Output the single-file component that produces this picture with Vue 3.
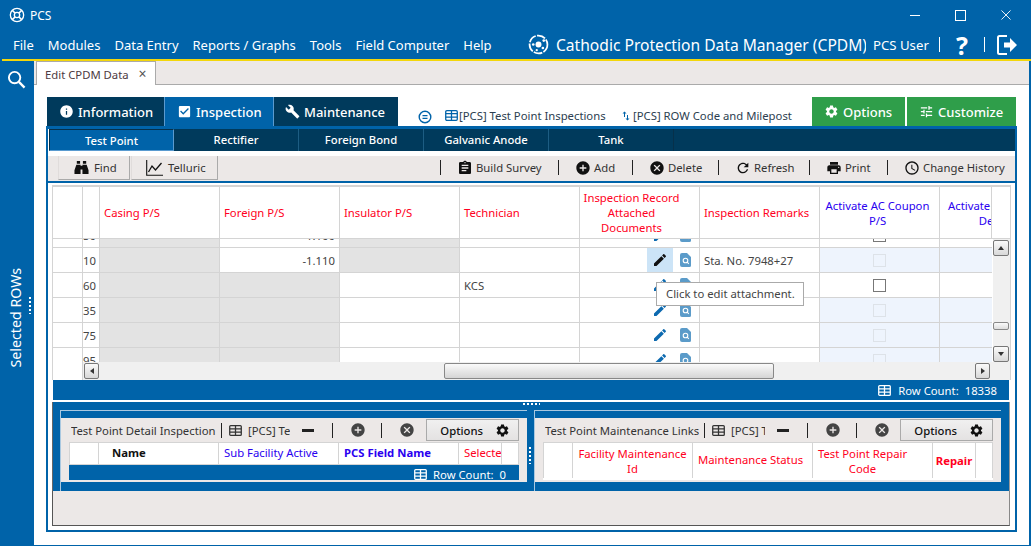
<template>
  <div class="window">
    <!-- title bar -->
    <div class="titlebar">
      <svg class="app-logo" viewBox="0 0 24 24"><circle cx="12" cy="12" r="10" fill="none" stroke="#fff" stroke-width="2" /><circle cx="12" cy="12" r="4" fill="none" stroke="#fff" stroke-width="2" /><path d="M5 5l4 4M19 5l-4 4M5 19l4-4M19 19l-4-4" stroke="#fff" stroke-width="2.4" /></svg>
      <span class="app-name">PCS</span>
      <div class="win-btns">
        <span class="win-min"></span>
        <span class="win-max"></span>
        <svg class="win-close" viewBox="0 0 11 11"><path d="M.5.5l10 10M10.500.5l-10 10" stroke="#fff" fill="none" /></svg>
      </div>
    </div>

    <!-- menu -->
    <div class="menubar">
      <span v-for="m in menu" :key="m" class="menu-item">{{ m }}</span>
      <div class="menu-right">
        <svg class="cp-logo" viewBox="0 0 24 24"><circle cx="12" cy="12" r="10.2" fill="none" stroke="#fff" stroke-width="2" stroke-dasharray="10 1.5" /><circle cx="12" cy="12" r="3.4" fill="#fff" /><circle cx="18" cy="7.5" r="1.5" fill="#fff" /><circle cx="6" cy="12" r="1.5" fill="#fff" /><circle cx="17" cy="16" r="1.5" fill="#fff" /><circle cx="10" cy="18.5" r="1.3" fill="#fff" /></svg>
        <span class="cp-title">Cathodic Protection Data Manager (CPDM)</span>
        <span class="cp-user">PCS User</span>
        <span class="menu-sep"></span>
        <span class="help">?</span>
        <span class="menu-sep"></span>
        <svg class="logout" viewBox="0 0 21 22"><path d="M10 2H2.500A1.500 1.500 0 0 0 1 3.500v15A1.500 1.500 0 0 0 2.500 20H10" fill="none" stroke="#fff" stroke-width="2" /><path d="M7 8.500h6V4l7 7-7 7v-4.500H7z" fill="#fff" /></svg>
      </div>
    </div>

    <div class="main">
      <!-- collapsed side panel -->
      <div class="sidebar">
        <svg class="side-search" viewBox="0 0 20 20"><circle cx="8" cy="8" r="6" fill="none" stroke="#fff" stroke-width="2" /><path d="M12.500 12.500l6 6" stroke="#fff" stroke-width="2.400" /></svg>
        <span class="side-label">Selected ROWs</span>
        <span class="side-dots"></span>
      </div>

      <div class="content">
        <div class="tabstrip">
          <div class="doc-tab">Edit CPDM Data <span class="doc-close">×</span></div>
        </div>

        <div class="page">
          <div class="toptabs">
            <div class="toptab dark info"><svg class="ti" viewBox="0 0 24 24"><path fill="#fff" :d="icons.info" /></svg>Information</div>
            <div class="toptab active insp"><svg class="ti" viewBox="0 0 24 24"><path fill="#fff" :d="icons.check" /></svg>Inspection</div>
            <div class="toptab dark maint"><svg class="ti" viewBox="0 0 24 24"><path fill="#fff" :d="icons.wrench" /></svg>Maintenance</div>
            <svg class="collapse" viewBox="0 0 14 14"><circle cx="7" cy="7" r="5.800" fill="none" stroke="#0063a9" stroke-width="1.400" /><path d="M4.500 5.700h5M4.500 8.300h5" stroke="#0063a9" stroke-width="1.200" /></svg>
            <div class="toplink first"><svg class="table-ic blue" viewBox="0 0 14 12"><rect x=".7" y=".7" width="12.600" height="10.600" rx="1.200" fill="none" stroke="#0063a9" stroke-width="1.400" /><path d="M.7 4h12.600M.7 7.700h12.600M7 .7v10.600" stroke="#0063a9" stroke-width="1.400" /></svg>[PCS] Test Point Inspections</div>
            <div class="toplink second"><svg class="swap" viewBox="0 0 24 24"><path fill="#0063a9" :d="icons.swap" /></svg>[PCS] ROW Code and Milepost</div>
            <div class="toptab green opts"><svg class="ti" viewBox="0 0 24 24"><path fill="#fff" :d="icons.gear" /></svg>Options</div>
            <div class="toptab green cust"><svg class="ti" viewBox="0 0 24 24"><path fill="#fff" :d="icons.tune" /></svg>Customize</div>
          </div>

          <div class="frame">
            <div class="subtabs">
              <div v-for="(s, i) in subtabs" :key="s" class="subtab" :class="{ on: i === 0 }">{{ s }}</div>
            </div>

            <div class="toolbar">
              <button class="tool-btn find"><svg class="bino" viewBox="0 0 16 16"><path d="M3 1h3.500v3H3zM9.500 1H13v3H9.500zM2.500 5H7v10H.5v-4zM9 5h4.500l2 6v4H9zM7 6h2v4H7z" fill="#111" /></svg>Find</button>
              <button class="tool-btn tell"><svg class="chart" viewBox="0 0 17 16"><path d="M.7 0v15.300H17" fill="none" stroke="#111" stroke-width="1.100" /><path d="M2.500 12l3.500-6 3.500 4 6-7" fill="none" stroke="#111" stroke-width="1.300" /></svg>Telluric</button>
              <div class="tool-right">
                <template v-for="t in tools" :key="t.label">
                  <span class="tool-sep"></span>
                  <span class="tool" :style="{ width: t.w + 'px' }">
                    <svg class="tool-ic" viewBox="0 0 24 24"><path fill="#111" :d="icons[t.icon]" /></svg>{{ t.label }}
                  </span>
                </template>
              </div>
            </div>

            <!-- main grid -->
            <div class="grid-wrap">
              <div class="grid-box">
                <div class="grid-head">
                  <div class="h-cell w30"></div>
                  <div class="h-cell w17"></div>
                  <div v-for="h in heads" :key="h.t" class="h-cell w120" :class="[h.c, h.extra, { left: h.left }]">{{ h.t }}</div>
                  <div class="h-cell w52 blue"><span class="clip-head">Activate AC Coupon Depolar</span></div>
                </div>
                <div class="grid-rows">
                  <div v-for="(r, i) in rows" :key="i" class="row" :class="{ partial: i === 0 }">
                    <div class="cell w30"></div>
                    <div class="cell w17 num">{{ r.n }}</div>
                    <div class="cell w120" :class="{ gray: r.cg }"></div>
                    <div class="cell w120 right" :class="{ gray: r.fg }">{{ r.f }}</div>
                    <div class="cell w120" :class="{ gray: r.ig }"></div>
                    <div class="cell w120 txt">{{ r.tech }}</div>
                    <div class="cell w120 att">
                      <span class="pen" :class="{ hot: r.hot }"><svg viewBox="0 0 24 24"><path :fill="r.hot ? '#111' : '#0d6ab0'" :d="icons.pencil" /></svg></span>
                      <svg class="doc" viewBox="0 0 11 14"><path d="M2 0h5l4 4v8.500a1.500 1.500 0 0 1-1.500 1.500h-7.500A2 2 0 0 1 0 12V2a2 2 0 0 1 2-2z" fill="#5b9bc9" /><circle cx="5.500" cy="7.500" r="2.300" fill="none" stroke="#fff" stroke-width="1.100" /><path d="M7.200 9.200l1.600 1.600" stroke="#fff" stroke-width="1.100" /></svg>
                    </div>
                    <div class="cell w120 txt">{{ r.rem }}</div>
                    <div class="cell w120 chk" :class="{ off: r.off }"><span class="box"></span></div>
                    <div class="cell w52 chk" :class="{ off: r.off }"></div>
                  </div>
                </div>
                <!-- vertical scrollbar -->
                <div class="vbar">
                  <span class="sb-btn"><i class="tri up"></i></span>
                  <span class="sb-thumb"></span>
                  <span class="sb-btn last"><i class="tri down"></i></span>
                </div>
                <div class="hbar">
                  <span class="sb-btn h"><i class="tri lft"></i></span>
                  <span class="hthumb"></span>
                  <span class="sb-btn h"><i class="tri rgt"></i></span>
                </div>
              </div>
              <div class="status"><svg class="table-ic" viewBox="0 0 14 12"><rect x=".7" y=".7" width="12.600" height="10.600" rx="1" fill="none" stroke="#fff" stroke-width="1.400" /><path d="M.7 4.200h12.600M.7 7.800h12.600M7 .7v10.600" stroke="#fff" stroke-width="1.400" /></svg><span>Row Count:</span><span class="count">18338</span></div>
            </div>

            <!-- lower panels -->
            <div class="lower">
              <span class="h-split"></span>
              <div class="panel pl">
                <div class="panel-in">
                  <div class="p-bar">
                    <span class="p-title">Test Point Detail Inspection</span>
                    <span class="p-sep"></span>
                    <svg class="table-ic dark-ic" viewBox="0 0 14 12"><rect x=".7" y=".7" width="12.600" height="10.600" rx="1" fill="none" stroke="#333" stroke-width="1.400" /><path d="M.7 4.200h12.600M.7 7.800h12.600M7 .7v10.600" stroke="#333" stroke-width="1.400" /></svg>
                    <span class="p-link l1">[PCS] Test Point</span>
                    <span class="p-minus"></span>
                    <span class="p-sep s2"></span>
                    <svg class="p-ic" viewBox="0 0 24 24"><path fill="#444" :d="icons.plus" /></svg>
                    <span class="p-sep s3"></span>
                    <svg class="p-ic last" viewBox="0 0 24 24"><path fill="#444" :d="icons.cancel" /></svg>
                    <button class="opt-btn">Options<svg viewBox="0 0 24 24"><path fill="#111" :d="icons.gear" /></svg></button>
                  </div>
                  <div class="p-grid short">
                    <div class="p-head">
                      <div class="p-c w30"></div>
                      <div class="p-c w120 b name">Name</div>
                      <div class="p-c w120 bl">Sub Facility Active</div>
                      <div class="p-c w120 bl b">PCS Field Name</div>
                      <div class="p-c w43 rd"><span class="cut">Selected</span></div>
                      <div class="p-c w17"></div>
                    </div>
                    <div class="p-status"><svg class="table-ic" viewBox="0 0 14 12"><rect x=".7" y=".7" width="12.600" height="10.600" rx="1" fill="none" stroke="#fff" stroke-width="1.400" /><path d="M.7 4.200h12.600M.7 7.800h12.600M7 .7v10.600" stroke="#fff" stroke-width="1.400" /></svg><span>Row Count:</span><span class="count0">0</span></div>
                  </div>
                </div>
              </div>
              <div class="v-split"></div>
              <div class="panel pr">
                <div class="panel-in">
                  <div class="p-bar">
                    <span class="p-title r">Test Point Maintenance Links</span>
                    <span class="p-sep"></span>
                    <svg class="table-ic dark-ic" viewBox="0 0 14 12"><rect x=".7" y=".7" width="12.600" height="10.600" rx="1" fill="none" stroke="#333" stroke-width="1.400" /><path d="M.7 4.200h12.600M.7 7.800h12.600M7 .7v10.600" stroke="#333" stroke-width="1.400" /></svg>
                    <span class="p-link l2">[PCS] Test Point</span>
                    <span class="p-minus"></span>
                    <span class="p-sep s2"></span>
                    <svg class="p-ic" viewBox="0 0 24 24"><path fill="#444" :d="icons.plus" /></svg>
                    <span class="p-sep s3"></span>
                    <svg class="p-ic last" viewBox="0 0 24 24"><path fill="#444" :d="icons.cancel" /></svg>
                    <button class="opt-btn">Options<svg viewBox="0 0 24 24"><path fill="#111" :d="icons.gear" /></svg></button>
                  </div>
                  <div class="p-grid">
                    <div class="p-head tall">
                      <div class="p-c w30"></div>
                      <div class="p-c w120 rd ctr">Facility Maintenance Id</div>
                      <div class="p-c w120 rd">Maintenance Status</div>
                      <div class="p-c w120 rd ctr repair-code">Test Point Repair Code</div>
                      <div class="p-c w43 rd b ctr"><span class="cut">Repair</span></div>
                      <div class="p-c w17"></div>
                    </div>
                  </div>
                </div>
              </div>
            </div>

            <div class="bottom-fill"></div>
          </div>
        </div>

        <div class="tooltip">Click to edit attachment.</div>
      </div>
    </div>
  </div>
</template>

<script setup>
const menu = ["File", "Modules", "Data Entry", "Reports / Graphs", "Tools", "Field Computer", "Help"];
const subtabs = ["Test Point", "Rectifier", "Foreign Bond", "Galvanic Anode", "Tank"];

const icons = {
  info: "M12 2C6.480 2 2 6.480 2 12s4.480 10 10 10 10-4.480 10-10S17.520 2 12 2zm1 15h-2v-6h2v6zm0-8h-2V7h2v2z",
  check: "M19 3H5c-1.110 0-2 .9-2 2v14c0 1.100.89 2 2 2h14c1.110 0 2-.9 2-2V5c0-1.100-.89-2-2-2zm-9 14l-5-5 1.410-1.410L10 14.170l7.590-7.590L19 8l-9 9z",
  wrench: "M22.700 19l-9.100-9.100c.9-2.300.4-5-1.500-6.900-2-2-5-2.400-7.400-1.300L9 6 6 9 1.600 4.700C.4 7.100.9 10.100 2.900 12.100c1.900 1.900 4.600 2.400 6.900 1.500l9.100 9.100c.4.4 1 .4 1.400 0l2.300-2.300c.5-.4.5-1.100.1-1.400z",
  gear: "M19.140 12.940c.04-.3.06-.61.06-.94 0-.32-.02-.64-.07-.94l2.030-1.580c.18-.14.23-.41.12-.61l-1.920-3.320c-.12-.22-.37-.29-.59-.22l-2.390.96c-.5-.38-1.030-.7-1.620-.94l-.36-2.540c-.04-.24-.24-.41-.48-.41h-3.840c-.24 0-.43.17-.47.41l-.36 2.540c-.59.24-1.130.57-1.620.94l-2.390-.96c-.22-.08-.47 0-.59.22L2.740 8.870c-.12.21-.08.47.12.61l2.030 1.580c-.05.3-.09.63-.09.94s.02.64.07.94l-2.030 1.580c-.18.14-.23.41-.12.61l1.920 3.320c.12.22.37.29.59.22l2.390-.96c.5.38 1.030.7 1.620.94l.36 2.540c.05.24.24.41.48.41h3.840c.24 0 .44-.17.47-.41l.36-2.540c.59-.24 1.130-.56 1.620-.94l2.390.96c.22.08.47 0 .59-.22l1.920-3.320c.12-.22.07-.47-.12-.61l-2.010-1.580zM12 15.600c-1.980 0-3.600-1.620-3.600-3.600s1.620-3.600 3.600-3.600 3.600 1.620 3.600 3.600-1.620 3.600-3.600 3.600z",
  tune: "M3 17v2h6v-2H3zM3 5v2h10V5H3zm10 16v-2h8v-2h-8v-2h-2v6h2zM7 9v2H3v2h4v2h2V9H7zm14 4v-2H11v2h10zm-6-4h2V7h4V5h-4V3h-2v6z",
  swap: "M16 17.010V10h-2v7.010h-3L15 21l4-3.990h-3zM9 3L5 6.990h3V14h2V6.990h3L9 3z",
  pencil: "M3 17.250V21h3.750L17.810 9.940l-3.750-3.750L3 17.250zM20.710 7.040c.39-.39.39-1.020 0-1.410l-2.340-2.340c-.39-.39-1.020-.39-1.410 0l-1.830 1.830 3.750 3.750 1.830-1.830z",
  clipboard: "M19 3h-4.180C14.400 1.840 13.300 1 12 1c-1.300 0-2.400.84-2.820 2H5c-1.100 0-2 .9-2 2v14c0 1.100.9 2 2 2h14c1.100 0 2-.9 2-2V5c0-1.100-.9-2-2-2zm-7 0c.55 0 1 .45 1 1s-.45 1-1 1-1-.45-1-1 .45-1 1-1zm2 14H7v-2h7v2zm3-4H7v-2h10v2zm0-4H7V7h10v2z",
  plus: "M12 2C6.480 2 2 6.480 2 12s4.480 10 10 10 10-4.480 10-10S17.520 2 12 2zm5 11h-4v4h-2v-4H7v-2h4V7h2v4h4v2z",
  cancel: "M12 2C6.470 2 2 6.470 2 12s4.470 10 10 10 10-4.470 10-10S17.530 2 12 2zm5 13.590L15.590 17 12 13.410 8.410 17 7 15.590 10.590 12 7 8.410 8.410 7 12 10.590 15.590 7 17 8.410 13.410 12 17 15.590z",
  refresh: "M17.650 6.350C16.200 4.900 14.210 4 12 4c-4.420 0-7.990 3.580-7.990 8s3.570 8 7.990 8c3.730 0 6.840-2.550 7.730-6h-2.080c-.82 2.330-3.040 4-5.650 4-3.310 0-6-2.690-6-6s2.690-6 6-6c1.660 0 3.140.69 4.220 1.780L13 11h7V4l-2.350 2.350z",
  print: "M19 8H5c-1.660 0-3 1.340-3 3v6h4v4h12v-4h4v-6c0-1.660-1.340-3-3-3zm-3 11H8v-5h8v5zm3-7c-.55 0-1-.45-1-1s.45-1 1-1 1 .45 1 1-.45 1-1 1zm-1-9H6v4h12V3z",
  clock: "M12 2C6.470 2 2 6.480 2 12s4.470 10 10 10 10-4.480 10-10S17.530 2 12 2zm0 18c-4.420 0-8-3.580-8-8s3.580-8 8-8 8 3.580 8 8-3.580 8-8 8zm.5-13H11v6l5.250 3.150.75-1.230-4.500-2.670z",
};

const tools = [
  { label: "Build Survey", icon: "clipboard", w: 117 },
  { label: "Add", icon: "plus", w: 73 },
  { label: "Delete", icon: "cancel", w: 85 },
  { label: "Refresh", icon: "refresh", w: 90 },
  { label: "Print", icon: "print", w: 77 },
  { label: "Change History", icon: "clock", w: 121 },
];

const heads = [
  { t: "Casing P/S", c: "red", left: true },
  { t: "Foreign P/S", c: "red", left: true },
  { t: "Insulator P/S", c: "red", left: true },
  { t: "Technician", c: "red", left: true },
  { t: "Inspection Record Attached Documents", c: "red", extra: "shift-l" },
  { t: "Inspection Remarks", c: "red", left: true },
  { t: "Activate AC Coupon P/S", c: "blue", extra: "shift-s" },
];

const rows = [
  { n: "50", cg: true, f: "-1.100", ig: true, off: false },
  { n: "10", cg: true, f: "-1.110", ig: true, hot: true, rem: "Sta. No. 7948+27", off: true },
  { n: "60", cg: true, fg: true, tech: "KCS", off: false },
  { n: "35", cg: true, fg: true, off: true },
  { n: "75", cg: true, fg: true, off: true },
  { n: "95", cg: true, fg: true, off: true },
];
</script>

<style scoped>
.window {
  width: 1031px;
  height: 546px;
  box-sizing: border-box;
  display: flex;
  flex-direction: column;
  background: #0063a9;
  font-family: "Noto Sans", "Open Sans", sans-serif;
  font-size: 11.300px;
  color: #333;
  overflow: hidden;
}

/* title + menu */
.titlebar {
  height: 30px;
  display: flex;
  align-items: center;
  padding-left: 9px;
  color: #fff;
  flex: none;
}
.app-logo { width: 16px; height: 16px; }
.app-name { margin-left: 5px; font-size: 12px; }
.win-btns { margin-left: auto; display: flex; align-items: center; }
.win-min { width: 10px; height: 1px; background: #fff; margin-right: 35px; }
.win-max { width: 9px; height: 9px; border: 1px solid #fff; margin-right: 35px; }
.win-close { width: 10px; height: 10px; margin-right: 20px; }

.menubar {
  height: 29px;
  flex: none;
  margin-left: 2px;
  border-bottom: 2px solid #f3d60b;
  display: flex;
  align-items: center;
  color: #fff;
  font-size: 13px;
  padding-left: 11px;
}
.menu-item { margin-right: 14px; white-space: nowrap; }
.menu-right { margin-left: auto; display: flex; align-items: center; padding-right: 13px; }
.cp-logo { width: 21px; height: 21px; }
.cp-title { margin-left: 7px; width: 310px; font-size: 15.600px; overflow: hidden; white-space: nowrap; }
.cp-user { margin-left: 7px; width: 56px; font-size: 13.200px; white-space: nowrap; }
.menu-sep { width: 1px; height: 15px; background: #fff; margin-left: 10px; }
.help { width: 44px; text-align: center; font-size: 25px; font-weight: 700; line-height: 28px; }
.help + .menu-sep { margin-left: 0; }
.logout { width: 21px; height: 22px; margin-left: 12px; }

.main { flex: 1; display: flex; min-height: 0; }
.sidebar { width: 33px; flex: none; position: relative; display: flex; flex-direction: column; align-items: center; }
.side-search { width: 19px; height: 19px; margin-top: 9px; }
.side-label {
  writing-mode: vertical-rl;
  transform: rotate(180deg);
  color: #fff;
  font-size: 14.200px;
  margin-top: 179px;
  white-space: nowrap;
  position: relative;
  left: -1px;
}
.side-dots {
  position: absolute;
  left: 29px;
  top: 236px;
  width: 2px;
  height: 17px;
  background: repeating-linear-gradient(to bottom, #fff 0 2px, transparent 2px 4px);
}

.content {
  flex: 1;
  min-width: 0;
  background: #fff;
  margin: 0 2px 1px 1px;
  position: relative;
  display: flex;
  flex-direction: column;
}
.tabstrip {
  height: 24px;
  box-sizing: border-box;
  background: #ece8e7;
  border-bottom: 1px solid #aaa;
  flex: none;
  padding-left: 2px;
}
.doc-tab {
  width: 120px;
  height: 24px;
  box-sizing: border-box;
  background: #fff;
  border: 1px solid #aaa;
  border-bottom: none;
  padding-left: 8px;
  line-height: 23px;
  color: #4d3a42;
  position: relative;
}
.doc-close { margin-left: 7px; font-size: 14px; color: #555; }

.page { flex: 1; padding: 12px 12px 13px 12px; min-height: 0; display: flex; flex-direction: column; }

/* big tabs */
.toptabs { height: 29px; display: flex; align-items: stretch; flex: none; }
.toptab {
  flex: none;
  display: flex;
  align-items: center;
  color: #fff;
  font-size: 13px;
  font-weight: 500;
  white-space: nowrap;
  box-sizing: border-box;
}
.ti { width: 15px; height: 15px; margin-right: 4px; }
.dark { background: #003a5c; }
.active { background: #0063a9; border-left: 1px solid #5a9bd0; border-right: 1px solid #5a9bd0; }
.green { background: #2f9e4a; }
.info { width: 117px; padding-left: 12px; margin-left: 1px; }
.insp { width: 110px; padding-left: 12px; }
.maint { width: 124px; padding-left: 11px; }
.opts { width: 93px; padding-left: 12px; margin-left: 3px; }
.cust { width: 109px; padding-left: 12px; margin-left: 2px; }
.collapse { width: 14px; height: 14px; margin: 13px 0 0 20px; flex: none; }
.toplink { flex: none; display: flex; align-items: center; white-space: nowrap; padding-top: 8px; color: #2c3e50; }
.toplink.first { margin-left: 13px; width: 175px; }
.toplink.second { width: 189px; }
.table-ic { width: 13px; height: 11px; margin-right: 1px; flex: none; }
.swap { width: 12px; height: 12px; margin-right: 1px; }

.frame {
  flex: 1;
  min-height: 0;
  border: 2px solid #0063a9;
  border-top-width: 3px;
  display: flex;
  flex-direction: column;
}

/* sub tabs */
.subtabs { height: 22px; display: flex; background: #003a5c; flex: none; margin-left: 1px; }
.subtab {
  width: 124px;
  flex: none;
  border-right: 1px solid #1d5d83;
  color: #fff;
  text-align: center;
  font-weight: 500;
  line-height: 21px;
}
.subtab:last-child { border-right: 1px solid #06304a; }
.subtab.on { background: #0063a9; border: 1px solid #06304a; border-right-color: #5a9bd0; border-bottom-color: #5a9bd0; box-sizing: border-box; width: 125px; line-height: 21px; }

/* toolbar */
.toolbar {
  height: 25px;
  margin-top: 5px;
  background: #ece8e7;
  border-bottom: 2px solid #0063a9;
  flex: none;
  display: flex;
  align-items: flex-start;
  padding-left: 10px;
}
.tool-btn {
  height: 24px;
  background: #ece8e7;
  border: none;
  border-right: 1px solid #aaa;
  border-bottom: 1px solid #aaa;
  border-left: 1px solid #e0dcdb;
  font: inherit;
  color: #333;
  display: flex;
  align-items: center;
  padding: 0;
  margin-right: 1px;
}
.find { width: 72px; padding-left: 15px; }
.tell { width: 87px; padding-left: 14px; }
.bino { width: 15px; height: 15px; margin-right: 5px; }
.chart { width: 17px; height: 16px; margin-right: 5px; }
.tool-right { margin-left: auto; display: flex; align-items: center; height: 23px; padding-right: 6px; }
.tool-sep { width: 1px; height: 15px; background: #222; }
.tool { display: flex; align-items: center; white-space: nowrap; padding-left: 16px; box-sizing: border-box; }
.tool-ic { width: 16px; height: 16px; margin-right: 3px; flex: none; }

/* main grid */
.grid-wrap { flex: none; padding: 0 4px; }
.grid-box {
  height: 193px;
  margin-top: 2px;
  border-top: 2px solid #d4d4d4;
  border-left: 1px solid #d4d4d4;
  border-right: 1px solid #d4d4d4;
  position: relative;
  overflow: hidden;
}
.grid-head { display: flex; height: 51px; border-bottom: 1px solid #d4d4d4; overflow: hidden; }
.h-cell {
  flex: none;
  display: flex;
  align-items: center;
  justify-content: center;
  text-align: center;
  box-sizing: border-box;
  border-right: 1px solid #d4d4d4;
  padding: 0 4px;
  line-height: 15px;
  overflow: hidden;
}
.h-cell.left { justify-content: flex-start; text-align: left; }
.h-cell.shift-l { padding: 0 16px 0 0; }
.h-cell.shift-s { padding: 0 5px 0 1px; }
.w30 { width: 30px; }
.w17 { width: 17px; }
.w120 { width: 120px; }
.w52 { width: 52px; }
.w43 { width: 43px; }
.red { color: #ff0022; }
.blue { color: #2a00f0; }
.clip-head { width: 112px; flex: none; }
.h-cell.w52 { justify-content: flex-start; }

.grid-rows { height: 123px; overflow: hidden; width: 939px; }
.row { display: flex; height: 25px; border-bottom: 1px solid #d4d4d4; box-sizing: border-box; }
.row.partial { margin-top: -16px; }
.cell {
  flex: none;
  height: 100%;
  box-sizing: border-box;
  border-right: 1px solid #d4d4d4;
  line-height: 25px;
  color: #444;
  white-space: nowrap;
  overflow: hidden;
}
.cell.w52 { border-right: none; }
.gray { background: #e3e3e3; }
.right { text-align: right; padding-right: 4px; }
.txt { padding-left: 4px; }
.att { display: flex; align-items: center; padding-left: 67px; }
.pen { width: 26px; height: 24px; display: flex; align-items: center; justify-content: center; flex: none; }
.pen.hot { background: #cce4f7; }
.pen svg { width: 16px; height: 16px; }
.doc { width: 11px; height: 14px; margin-left: 7px; flex: none; }
.chk { display: flex; align-items: center; justify-content: center; }
.box { width: 11px; height: 11px; border: 1px solid #777; background: #fff; }
.off { background: #eef4fd; }
.off .box { background: #eef4fd; border-color: #dde2e8; }

.vbar {
  position: absolute;
  right: 0;
  top: 52px;
  width: 17px;
  height: 123px;
  background: #f0f0f0;
  display: flex;
  flex-direction: column;
  padding-top: 1px;
  box-sizing: border-box;
}
.sb-btn {
  width: 16px;
  height: 16px;
  box-sizing: border-box;
  border: 1px solid #777;
  border-radius: 2px;
  background: linear-gradient(#fafafa, #d8d8d8);
  display: flex;
  align-items: center;
  justify-content: center;
  flex: none;
}
.sb-btn.last { margin-top: 16px; }
.sb-thumb { width: 16px; height: 8px; border: 1px solid #888; border-radius: 2px; box-sizing: border-box; background: linear-gradient(#fafafa, #ddd); margin-top: 66px; flex: none; }
.tri { width: 0; height: 0; border: 3.500px solid transparent; }
.tri.up { border-bottom: 4px solid #333; border-top: none; }
.tri.down { border-top: 4px solid #333; border-bottom: none; }
.tri.lft { border-right: 4px solid #333; border-left: none; }
.tri.rgt { border-left: 4px solid #333; border-right: none; }
.hbar {
  height: 18px;
  background: #f0f0f0;
  margin-left: 29px;
  display: flex;
  align-items: center;
  padding-left: 1px;
  box-sizing: border-box;
  border-left: 1px solid #d4d4d4;
}
.hthumb {
  width: 330px;
  height: 16px;
  flex: none;
  box-sizing: border-box;
  border: 1px solid #888;
  border-radius: 2px;
  background: linear-gradient(#fafafa, #d5d5d5);
  margin: 0 201px 0 345px;
}
.sb-btn.h { width: 15px; height: 16px; }

.status {
  height: 20px;
  margin-left: 1px;
  margin-right: 2px;
  background: #0063a9;
  color: #fff;
  display: flex;
  align-items: center;
  justify-content: flex-end;
  padding-right: 12px;
}
.status .table-ic { margin-right: 7px; }
.count { margin-left: 6px; }

/* lower panels */
.lower {
  height: 89px;
  margin: 2px 5px 0 4px;
  border-left: 1px solid #666;
  border-right: 1px solid #999;
  background: #0063a9;
  display: flex;
  flex: none;
  padding-left: 7px;
  padding-top: 8px;
  box-sizing: border-box;
  position: relative;
}
.h-split {
  position: absolute;
  left: 470px;
  top: 1px;
  width: 17px;
  height: 2px;
  background: repeating-linear-gradient(to right, #fff 0 2px, transparent 2px 4px);
}
.panel { flex: none; border-left: 1px solid #a9c8e0; border-top: 1px solid #a9c8e0; height: 81px; box-sizing: border-box; padding-top: 7px; width: 467px; }
.panel-in { background: #ece8e7; height: 64px; padding: 0 8px; box-sizing: border-box; }
.v-split {
  width: 7px;
  flex: none;
  position: relative;
}
.v-split::after {
  content: "";
  position: absolute;
  left: 2px;
  top: 37px;
  width: 2px;
  height: 17px;
  background: repeating-linear-gradient(to bottom, #fff 0 2px, transparent 2px 4px);
}
.p-bar { height: 24px; display: flex; align-items: center; white-space: nowrap; }
.p-title { margin-left: 2px; width: 145px; overflow: hidden; flex: none; }
.p-title.r { width: 154px; }
.p-sep { width: 1px; height: 15px; background: #222; margin-left: 5px; margin-right: 7px; flex: none; }
.p-link { margin-left: 5px; overflow: hidden; flex: none; }
.l1 { width: 42px; }
.l2 { width: 34px; }
.p-minus { width: 12px; height: 3px; background: #222; margin-left: 12px; flex: none; }
.s2 { margin-left: 18px; margin-right: 17px; }
.s3 { margin-left: 15px; margin-right: 17px; }
.p-ic { width: 16px; height: 16px; flex: none; }
.p-ic.last { margin-right: 9px; }
.opt-btn {
  width: 93px;
  height: 22px;
  margin-left: auto;
  box-sizing: border-box;
  border: 1px solid #aaa;
  background: linear-gradient(#f0f0f0, #e4e2e2);
  font: inherit;
  font-weight: 500;
  color: #111;
  display: flex;
  align-items: center;
  justify-content: flex-end;
  padding: 0 8px 0 0;
  flex: none;
}
.opt-btn svg { width: 15px; height: 15px; margin-left: 12px; }
.p-grid { height: 38px; overflow: hidden; border-top: 1px solid #d4d4d4; background: #fff; box-sizing: border-box; }
.p-head { display: flex; height: 21px; border-bottom: 1px solid #d4d4d4; }
.p-head.tall { height: 35px; border-bottom: none; }
.p-c {
  flex: none;
  box-sizing: border-box;
  border-right: 1px solid #d4d4d4;
  display: flex;
  align-items: center;
  padding-left: 5px;
  padding-bottom: 2px;
  line-height: 15px;
  overflow: hidden;
}
.p-c:first-child { border-left: 1px solid #d4d4d4; }
.p-c.ctr { justify-content: center; text-align: center; padding: 0 2px; }
.p-c.repair-code { padding: 0 22px 0 2px; }
.b { font-weight: 700; }
.name { padding-left: 13px; color: #111; }
.bl { color: #2a00f0; }
.rd { color: #ff0022; }
.cut { width: 38px; flex: none; overflow: hidden; white-space: nowrap; }
.p-status { height: 15px; background: #0063a9; color: #fff; display: flex; align-items: flex-start; justify-content: flex-end; padding-right: 13px; line-height: 17px; overflow: hidden; padding-top: 1px; box-sizing: border-box; }
.p-status .table-ic { margin: 3px 6px 0 0; }
.count0 { margin-left: 6px; }

.bottom-fill {
  height: 34px;
  flex: none;
  margin: 0 5px 0 4px;
  background: #ece8e7;
  border-left: 1px solid #555;
  border-bottom: 1px solid #555;
  border-right: 1px solid #888;
}

.tooltip {
  position: absolute;
  left: 622px;
  top: 221px;
  width: 148px;
  height: 24px;
  box-sizing: border-box;
  border: 1px solid #aaa;
  background: #fff;
  line-height: 22px;
  padding-left: 9px;
  color: #444;
}
</style>

<style>
body { margin: 0; overflow: hidden; }
</style>
